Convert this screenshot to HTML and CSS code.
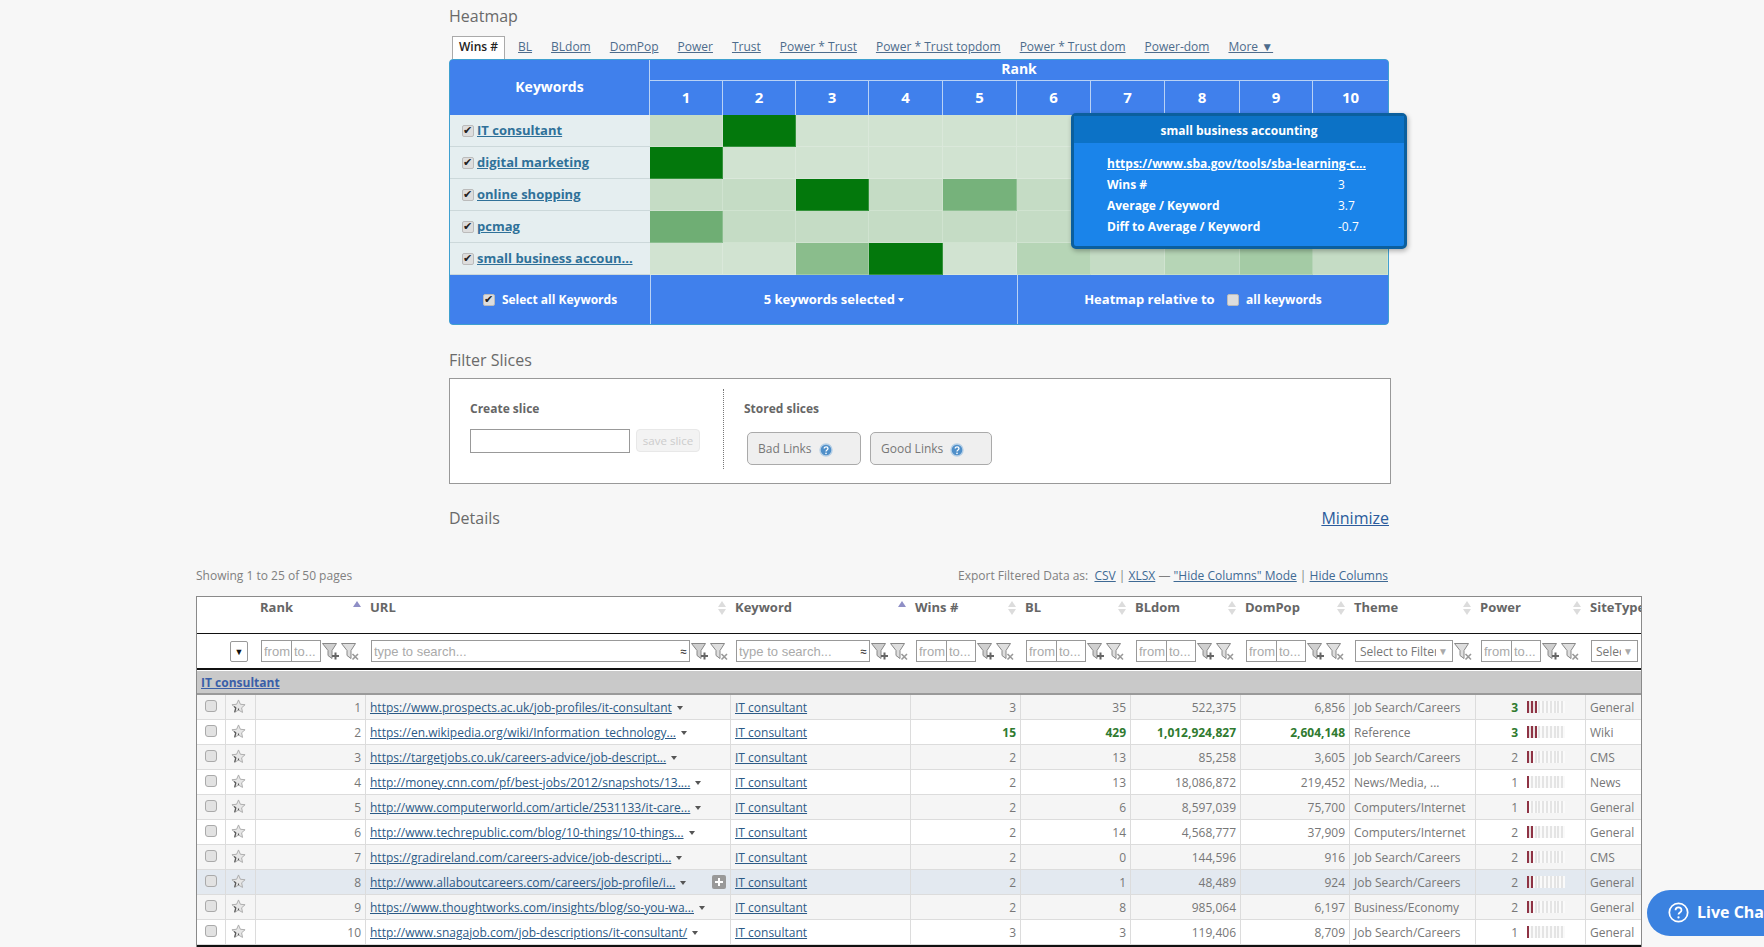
FILE: index.html
```html
<!DOCTYPE html>
<html lang="en">
<head>
  <meta charset="UTF-8" />
  <title>Heatmap</title>
  <link rel="stylesheet" href="styles.css">
</head>
<body>
  <svg class="sprites" width="0" height="0">
    <symbol id="star" viewBox="0 0 16 16">
      <path d="M8 1l2 4.6 5 .5-3.7 3.3 1 4.9L8 11.8l-4.3 2.5 1-4.9L1 6.1l5-.5z" fill="#e6e6e6" stroke="#aaa" stroke-width="1"/>
      <path d="M4 14l1.2-4.4L3.4 8M8 12v-2" fill="none" stroke="#555" stroke-width="1.2"/>
    </symbol>
    <symbol id="funnel-add" viewBox="0 0 18 18">
      <path d="M.5 1h14L10 8v8L6 13V8z" fill="#cfcfcf" stroke="#888" stroke-width="1"/>
      <path d="M13.5 10v7M10 13.5h7" stroke="#666" stroke-width="2"/>
    </symbol>
    <symbol id="funnel-clear" viewBox="0 0 18 18">
      <path d="M.5 1h14L10 8v8L6 13V8z" fill="#dedede" stroke="#888" stroke-width="1"/>
      <path d="M11.5 11.5l5.5 5.5M17 11.5L11.5 17" stroke="#999" stroke-width="1.6"/>
    </symbol>
    <symbol id="help" viewBox="0 0 14 14">
      <circle cx="7" cy="7" r="6" fill="#4f8fc9" stroke="#b5cfe6" stroke-width="1.4"/>
      <path d="M5.2 5.6c0-2.2 3.8-2.2 3.8 0 0 1.4-2 1.3-2 2.8" fill="none" stroke="#fff" stroke-width="1.3"/>
      <circle cx="7" cy="10.4" r=".8" fill="#fff"/>
    </symbol>
  </svg>

  <div class="narrow">
    <h2 class="section-title">Heatmap</h2>
    <div class="tabs">
      <a class="tab active">Wins #</a>
      <a class="tab">BL</a>
      <a class="tab">BLdom</a>
      <a class="tab">DomPop</a>
      <a class="tab">Power</a>
      <a class="tab">Trust</a>
      <a class="tab">Power * Trust</a>
      <a class="tab">Power * Trust topdom</a>
      <a class="tab">Power * Trust dom</a>
      <a class="tab">Power-dom</a>
      <a class="tab">More ▼</a>
    </div>

    <div class="heatmap">
      <table class="heat-table">
        <colgroup>
          <col class="kw-col"><col class="c73"><col class="c73"><col class="c73"><col class="c74"><col class="c74"><col class="c74"><col class="c74"><col class="c75"><col class="c73"><col>
        </colgroup>
        <thead>
          <tr class="rank-row">
            <th rowspan="2">Keywords</th>
            <th colspan="10">Rank</th>
          </tr>
          <tr class="num-row">
            <th>1</th><th>2</th><th>3</th><th>4</th><th>5</th><th>6</th><th>7</th><th>8</th><th>9</th><th>10</th>
          </tr>
        </thead>
        <tbody>
          <tr>
            <td class="kw"><input type="checkbox" class="kw-check" checked><a>IT consultant</a></td>
            <td class="h2"></td><td class="h9"></td><td class="h1"></td><td class="h1"></td><td class="h1"></td><td class="h1"></td><td class="h1"></td><td class="h1"></td><td class="h1"></td><td class="h1"></td>
          </tr>
          <tr>
            <td class="kw"><input type="checkbox" class="kw-check" checked><a>digital marketing</a></td>
            <td class="h9"></td><td class="h1"></td><td class="h1"></td><td class="h1"></td><td class="h1"></td><td class="h1"></td><td class="h1"></td><td class="h1"></td><td class="h1"></td><td class="h1"></td>
          </tr>
          <tr>
            <td class="kw"><input type="checkbox" class="kw-check" checked><a>online shopping</a></td>
            <td class="h2"></td><td class="h2"></td><td class="h9"></td><td class="h2"></td><td class="h6"></td><td class="h2"></td><td class="h2"></td><td class="h2"></td><td class="h2"></td><td class="h2"></td>
          </tr>
          <tr>
            <td class="kw"><input type="checkbox" class="kw-check" checked><a>pcmag</a></td>
            <td class="h7"></td><td class="h2"></td><td class="h2"></td><td class="h2"></td><td class="h2"></td><td class="h2"></td><td class="h2"></td><td class="h2"></td><td class="h2"></td><td class="h2"></td>
          </tr>
          <tr>
            <td class="kw"><input type="checkbox" class="kw-check" checked><a>small business accoun...</a></td>
            <td class="h1"></td><td class="h1"></td><td class="h5"></td><td class="h9"></td><td class="h1"></td><td class="h3"></td><td class="h2"></td><td class="h3"></td><td class="h4"></td><td class="h2"></td>
          </tr>
        </tbody>
        <tfoot>
          <tr>
            <td class="foot-all"><label><input type="checkbox" class="kw-check" checked>Select all Keywords</label></td>
            <td colspan="5" class="foot-mid">5 keywords selected <span class="caret white"></span></td>
            <td colspan="5" class="foot-rel">Heatmap relative to <input type="checkbox" class="kw-check"><small>all keywords</small></td>
          </tr>
        </tfoot>
      </table>

      <div class="tooltip">
        <div class="tooltip-head">small business accounting</div>
        <div class="tooltip-body">
          <a>https://www.sba.gov/tools/sba-learning-c...</a>
          <div class="tooltip-row"><b>Wins #</b><span>3</span></div>
          <div class="tooltip-row"><b>Average / Keyword</b><span>3.7</span></div>
          <div class="tooltip-row"><b>Diff to Average / Keyword</b><span>-0.7</span></div>
        </div>
      </div>
    </div>

    <h2 class="section-title filter-title">Filter Slices</h2>
    <div class="slices">
      <div class="slice-create">
        <div class="slice-label">Create slice</div>
        <div class="slice-form">
          <input type="text" class="slice-input">
          <button class="slice-save">save slice</button>
        </div>
      </div>
      <div class="slice-stored">
        <div class="slice-label">Stored slices</div>
        <div class="slice-btns">
          <button class="slice-btn bad">Bad Links <svg class="help"><use href="#help"/></svg></button>
          <button class="slice-btn good">Good Links <svg class="help"><use href="#help"/></svg></button>
        </div>
      </div>
    </div>

    <div class="details-head">
      <h2 class="section-title">Details</h2>
      <a class="minimize">Minimize</a>
    </div>

    <div class="table-info">
      <span class="showing">Showing 1 to 25 of 50 pages</span>
      <span>Export Filtered Data as: &nbsp;<a>CSV</a> | <a>XLSX</a> — <a>"Hide Columns" Mode</a> | <a>Hide Columns</a></span>
    </div>
  </div>

  <div class="data-wrap">
    <table class="data">
      <colgroup>
        <col class="w-check"><col class="w-star"><col class="w-rank"><col class="w-url"><col class="w-kw"><col class="w-wins"><col class="w-bl"><col class="w-bldom"><col class="w-dompop"><col class="w-theme"><col class="w-power"><col class="w-site">
      </colgroup>
      <thead>
        <tr class="head-row">
          <th></th><th></th>
          <th><div class="th-in">Rank<span class="sort up"></span></div></th>
          <th><div class="th-in">URL<span class="sort"></span></div></th>
          <th><div class="th-in">Keyword<span class="sort up"></span></div></th>
          <th><div class="th-in">Wins #<span class="sort"></span></div></th>
          <th><div class="th-in">BL<span class="sort"></span></div></th>
          <th><div class="th-in">BLdom<span class="sort"></span></div></th>
          <th><div class="th-in">DomPop<span class="sort"></span></div></th>
          <th><div class="th-in">Theme<span class="sort"></span></div></th>
          <th><div class="th-in">Power<span class="sort"></span></div></th>
          <th><div class="th-in">SiteType</div></th>
        </tr>
        <tr class="filter-row">
          <td></td>
          <td><span class="drop-btn">▼</span></td>
          <td><div class="f-in"><div class="range"><input placeholder="from"><input placeholder="to..."></div><svg class="fn"><use href="#funnel-add"/></svg><svg class="fn"><use href="#funnel-clear"/></svg></div></td>
          <td><div class="f-in"><div class="search url-search"><input placeholder="type to search..."><i>≈</i></div><svg class="fn"><use href="#funnel-add"/></svg><svg class="fn"><use href="#funnel-clear"/></svg></div></td>
          <td><div class="f-in"><div class="search kw-search"><input placeholder="type to search..."><i>≈</i></div><svg class="fn"><use href="#funnel-add"/></svg><svg class="fn"><use href="#funnel-clear"/></svg></div></td>
          <td><div class="f-in"><div class="range"><input placeholder="from"><input placeholder="to..."></div><svg class="fn"><use href="#funnel-add"/></svg><svg class="fn"><use href="#funnel-clear"/></svg></div></td>
          <td><div class="f-in"><div class="range"><input placeholder="from"><input placeholder="to..."></div><svg class="fn"><use href="#funnel-add"/></svg><svg class="fn"><use href="#funnel-clear"/></svg></div></td>
          <td><div class="f-in"><div class="range"><input placeholder="from"><input placeholder="to..."></div><svg class="fn"><use href="#funnel-add"/></svg><svg class="fn"><use href="#funnel-clear"/></svg></div></td>
          <td><div class="f-in"><div class="range"><input placeholder="from"><input placeholder="to..."></div><svg class="fn"><use href="#funnel-add"/></svg><svg class="fn"><use href="#funnel-clear"/></svg></div></td>
          <td><div class="f-in"><div class="pick theme-pick"><span>Select to Filter</span><i>▼</i></div><svg class="fn"><use href="#funnel-clear"/></svg></div></td>
          <td><div class="f-in"><div class="range"><input placeholder="from"><input placeholder="to..."></div><svg class="fn"><use href="#funnel-add"/></svg><svg class="fn"><use href="#funnel-clear"/></svg></div></td>
          <td><div class="f-in"><div class="pick site-pick"><span>Select to Filter</span><i>▼</i></div></div></td>
        </tr>
      </thead>
      <tbody>
        <tr class="group-row"><td colspan="12"><a>IT consultant</a></td></tr>

        <tr class="odd">
          <td><input type="checkbox" class="row-check"></td><td><svg class="star"><use href="#star"/></svg></td><td class="num">1</td>
          <td><a>https://www.prospects.ac.uk/job-profiles/it-consultant</a><span class="caret"></span></td><td><a>IT consultant</a></td>
          <td class="num">3</td><td class="num">35</td><td class="num">522,375</td><td class="num">6,856</td><td>Job Search/Careers</td>
          <td><div class="power"><b class="best">3</b><div class="bar"><div class="fill p3"></div></div></div></td><td>General</td>
        </tr>
        <tr>
          <td><input type="checkbox" class="row-check"></td><td><svg class="star"><use href="#star"/></svg></td><td class="num">2</td>
          <td><a>https://en.wikipedia.org/wiki/Information_technology...</a><span class="caret"></span></td><td><a>IT consultant</a></td>
          <td class="num best">15</td><td class="num best">429</td><td class="num best">1,012,924,827</td><td class="num best">2,604,148</td><td>Reference</td>
          <td><div class="power"><b class="best">3</b><div class="bar"><div class="fill p3"></div></div></div></td><td>Wiki</td>
        </tr>
        <tr class="odd">
          <td><input type="checkbox" class="row-check"></td><td><svg class="star"><use href="#star"/></svg></td><td class="num">3</td>
          <td><a>https://targetjobs.co.uk/careers-advice/job-descript...</a><span class="caret"></span></td><td><a>IT consultant</a></td>
          <td class="num">2</td><td class="num">13</td><td class="num">85,258</td><td class="num">3,605</td><td>Job Search/Careers</td>
          <td><div class="power"><span>2</span><div class="bar"><div class="fill p2"></div></div></div></td><td>CMS</td>
        </tr>
        <tr>
          <td><input type="checkbox" class="row-check"></td><td><svg class="star"><use href="#star"/></svg></td><td class="num">4</td>
          <td><a>http://money.cnn.com/pf/best-jobs/2012/snapshots/13....</a><span class="caret"></span></td><td><a>IT consultant</a></td>
          <td class="num">2</td><td class="num">13</td><td class="num">18,086,872</td><td class="num">219,452</td><td>News/Media, ...</td>
          <td><div class="power"><span>1</span><div class="bar"><div class="fill p1"></div></div></div></td><td>News</td>
        </tr>
        <tr class="odd">
          <td><input type="checkbox" class="row-check"></td><td><svg class="star"><use href="#star"/></svg></td><td class="num">5</td>
          <td><a>http://www.computerworld.com/article/2531133/it-care...</a><span class="caret"></span></td><td><a>IT consultant</a></td>
          <td class="num">2</td><td class="num">6</td><td class="num">8,597,039</td><td class="num">75,700</td><td>Computers/Internet</td>
          <td><div class="power"><span>1</span><div class="bar"><div class="fill p1"></div></div></div></td><td>General</td>
        </tr>
        <tr>
          <td><input type="checkbox" class="row-check"></td><td><svg class="star"><use href="#star"/></svg></td><td class="num">6</td>
          <td><a>http://www.techrepublic.com/blog/10-things/10-things...</a><span class="caret"></span></td><td><a>IT consultant</a></td>
          <td class="num">2</td><td class="num">14</td><td class="num">4,568,777</td><td class="num">37,909</td><td>Computers/Internet</td>
          <td><div class="power"><span>2</span><div class="bar"><div class="fill p2"></div></div></div></td><td>General</td>
        </tr>
        <tr class="odd">
          <td><input type="checkbox" class="row-check"></td><td><svg class="star"><use href="#star"/></svg></td><td class="num">7</td>
          <td><a>https://gradireland.com/careers-advice/job-descripti...</a><span class="caret"></span></td><td><a>IT consultant</a></td>
          <td class="num">2</td><td class="num">0</td><td class="num">144,596</td><td class="num">916</td><td>Job Search/Careers</td>
          <td><div class="power"><span>2</span><div class="bar"><div class="fill p2"></div></div></div></td><td>CMS</td>
        </tr>
        <tr class="hover">
          <td><input type="checkbox" class="row-check"></td><td><svg class="star"><use href="#star"/></svg></td><td class="num">8</td>
          <td class="url-plus"><a>http://www.allaboutcareers.com/careers/job-profile/i...</a><span class="caret"></span><span class="plus"></span></td><td><a>IT consultant</a></td>
          <td class="num">2</td><td class="num">1</td><td class="num">48,489</td><td class="num">924</td><td>Job Search/Careers</td>
          <td><div class="power"><span>2</span><div class="bar"><div class="fill p2"></div></div></div></td><td>General</td>
        </tr>
        <tr class="odd">
          <td><input type="checkbox" class="row-check"></td><td><svg class="star"><use href="#star"/></svg></td><td class="num">9</td>
          <td><a>https://www.thoughtworks.com/insights/blog/so-you-wa...</a><span class="caret"></span></td><td><a>IT consultant</a></td>
          <td class="num">2</td><td class="num">8</td><td class="num">985,064</td><td class="num">6,197</td><td>Business/Economy</td>
          <td><div class="power"><span>2</span><div class="bar"><div class="fill p2"></div></div></div></td><td>General</td>
        </tr>
        <tr>
          <td><input type="checkbox" class="row-check"></td><td><svg class="star"><use href="#star"/></svg></td><td class="num">10</td>
          <td><a>http://www.snagajob.com/job-descriptions/it-consultant/</a><span class="caret"></span></td><td><a>IT consultant</a></td>
          <td class="num">3</td><td class="num">3</td><td class="num">119,406</td><td class="num">8,709</td><td>Job Search/Careers</td>
          <td><div class="power"><span>1</span><div class="bar"><div class="fill p1"></div></div></div></td><td>General</td>
        </tr>
      </tbody>
    </table>
  </div>

  <div class="live-chat">
    <svg class="chat-icon" viewBox="0 0 24 24"><circle cx="12" cy="12" r="10.5" fill="none" stroke="#fff" stroke-width="2"/><path d="M8.6 9.4c0-4.4 6.8-4.4 6.8 0 0 2.7-3.4 2.5-3.4 5" fill="none" stroke="#fff" stroke-width="2"/><circle cx="12" cy="17.6" r="1.3" fill="#fff"/></svg>
    <span>Live Chat</span>
  </div>
</body>
</html>
```

FILE: styles.css
```css
* {
  box-sizing: border-box;
}

html, body {
  height: 947px;
  overflow: hidden;
}

body {
  margin: 0;
  font-family: "Open Sans", sans-serif;
  font-size: 12px;
  background-color: #f7f7f7;
  color: #777;
}

a {
  color: #2b5a86;
  text-decoration: underline;
}

.sprites {
  position: absolute;
}

.narrow {
  margin-left: 449px;
  width: 940px;
  padding-top: 4px;
}

.section-title {
  margin: 0;
  font-size: 16px;
  font-weight: 400;
  line-height: 24px;
  color: #6a6a6a;
}

/* tabs */
.tabs {
  display: flex;
  gap: 19px;
  margin-top: 8px;
  padding-left: 3px;
  height: 23px;
  font-size: 12px;
  line-height: 21px;
}

.tab {
  color: #4d6c8c;
}

.tab.active {
  background-color: #fff;
  border: 1px solid #aaa;
  border-bottom: none;
  margin-right: -6px;
  padding: 0 6px;
  line-height: 20px;
  font-weight: 600;
  color: #222;
  text-decoration: none;
}

/* heatmap */
.heatmap {
  position: relative;
}

.heat-table {
  width: 940px;
  height: 266px;
  table-layout: fixed;
  border-collapse: separate;
  border-spacing: 0;
  border: 1px solid #3fa0d0;
  border-radius: 4px;
  overflow: hidden;
  background-color: #4080ec;
}

.kw-col { width: 200px; }
.c73 { width: 73px; }
.c74 { width: 74px; }
.c75 { width: 75px; }

.heat-table th {
  color: #fff;
  font-weight: 700;
  font-size: 14px;
  line-height: 16px;
  padding: 0 0 2px;
  background-color: #4080ec;
}

.rank-row { height: 21px; }
.num-row { height: 34px; }

.rank-row th:first-child {
  border-right: 1px solid #b9d2f5;
}

.rank-row th:last-child {
  border-bottom: 1px solid #b9d2f5;
}

.num-row th {
  font-size: 15px;
  border-right: 1px solid #b9d2f5;
}

.num-row th:last-child {
  border-right: none;
}

.heat-table tbody tr {
  height: 32px;
}

.heat-table tbody td {
  padding: 0;
  border-right: 1px solid rgba(255, 255, 255, 0.2);
  border-bottom: 1px solid rgba(255, 255, 255, 0.2);
}

.heat-table td.kw {
  background-color: #e5eef0;
  border-right: none;
  border-bottom: 1px solid #ccd8da;
  padding: 0 0 2px 12px;
  font-size: 13px;
  font-weight: 700;
  white-space: nowrap;
}

.kw a {
  color: #2f7199;
}

.h1 { background-color: #d1e3d1; }
.h2 { background-color: #c5dcc5; }
.h3 { background-color: #b6d5b6; }
.h4 { background-color: #a4cba5; }
.h5 { background-color: #8abd8c; }
.h6 { background-color: #76b27b; }
.h7 { background-color: #6fae74; }
.h9 { background-color: #03780c; }

.kw-check {
  appearance: none;
  width: 12px;
  height: 12px;
  margin: 0 3px 0 0;
  vertical-align: -2px;
  background-color: #ddd;
  border-radius: 2px;
  border: 1px solid #bbb;
  position: relative;
}

.kw-check:checked::after {
  content: "✔";
  position: absolute;
  top: -2px;
  left: 0;
  font-size: 11px;
  line-height: 13px;
  color: #222;
}

.heat-table tfoot tr {
  height: 49px;
}

.heat-table tfoot td {
  padding: 0 0 1px;
  color: #fff;
  font-weight: 700;
  text-align: center;
  background-color: #4080ec;
  border-left: 1px solid #b9d2f5;
  font-size: 13px;
}

.heat-table td.foot-all {
  border-left: none;
  font-size: 12px;
}

.foot-all .kw-check {
  margin-right: 7px;
}

.foot-rel .kw-check {
  margin: 0 7px 0 9px;
}

.foot-rel small {
  font-size: 12px;
}

.caret {
  display: inline-block;
  width: 0;
  height: 0;
  margin-left: 5px;
  vertical-align: 2px;
  border-left: 3.5px solid transparent;
  border-right: 3.5px solid transparent;
  border-top: 4px solid #555;
}

.caret.white {
  margin-left: 0;
  border-top-color: #fff;
}

/* tooltip over the heat cells */
.tooltip {
  position: absolute;
  left: 622px;
  top: 54px;
  width: 336px;
  height: 136px;
  background-color: #1a84ea;
  border: 3px solid #0b5f9e;
  border-radius: 5px;
  box-shadow: 1px 2px 5px rgba(0, 0, 0, 0.3);
  color: #fff;
  font-size: 12px;
}

.tooltip-head {
  height: 27px;
  line-height: 29px;
  text-align: center;
  font-weight: 700;
  background-color: #0c72c6;
}

.tooltip-body {
  padding: 10px 0 0 33px;
}

.tooltip-body a {
  display: block;
  height: 21px;
  line-height: 21px;
  color: #fff;
  font-weight: 700;
}

.tooltip-row {
  display: flex;
  height: 21px;
  line-height: 21px;
}

.tooltip-row b {
  width: 231px;
}

/* slices */
.filter-title {
  margin-top: 23px;
}

.slices {
  display: flex;
  margin-top: 6px;
  width: 942px;
  height: 106px;
  background-color: #fff;
  border: 1px solid #999;
  padding: 10px 0 0 20px;
}

.slice-create {
  width: 254px;
  height: 80px;
  border-right: 1px dotted #777;
}

.slice-label {
  padding-top: 11px;
  font-size: 12px;
  font-weight: 700;
  line-height: 17px;
  color: #666;
}

.slice-form {
  display: flex;
  gap: 6px;
  margin-top: 12px;
}

.slice-input {
  width: 160px;
  height: 24px;
  border: 1px solid #999;
  background-color: #fff;
}

.slice-save {
  width: 64px;
  height: 23px;
  padding: 0;
  font: 11.5px "Open Sans", sans-serif;
  color: #ccc;
  background-color: #f3f3f3;
  border: 1px solid #e8e8e8;
  border-radius: 4px;
}

.slice-stored {
  padding-left: 20px;
}

.slice-btns {
  display: flex;
  gap: 9px;
  margin: 15px 0 0 3px;
}

.slice-btn {
  display: flex;
  align-items: center;
  gap: 7px;
  height: 33px;
  padding: 0 0 0 10px;
  font: 12px "Open Sans", sans-serif;
  color: #777;
  background-color: #efefef;
  border: 1px solid #aaa;
  border-radius: 5px;
}

.slice-btn.bad { width: 114px; }
.slice-btn.good { width: 122px; }

.help {
  width: 14px;
  height: 14px;
  margin-top: 2px;
}

.details-head {
  display: flex;
  justify-content: space-between;
  align-items: center;
  margin-top: 22px;
}

.minimize {
  font-size: 16px;
  color: #2a5b9c;
}

.table-info {
  display: flex;
  justify-content: space-between;
  height: 20px;
  margin: 36px 0 10px -253px;
  width: 1192px;
  line-height: 20px;
  font-size: 12px;
  color: #808080;
}

.table-info a {
  color: #3f6a94;
}

/* data table */
.data-wrap {
  margin-left: 196px;
  width: 1446px;
  border: 1px solid #8a8a8a;
  border-bottom: none;
  overflow: hidden;
  background-color: #fff;
}

.data {
  width: 1472px;
  table-layout: fixed;
  border-collapse: separate;
  border-spacing: 0;
  border-bottom: 2px solid #111;
}

.w-check { width: 29px; }
.w-star { width: 30px; }
.w-rank { width: 110px; }
.w-url { width: 365px; }
.w-kw { width: 180px; }
.w-wins { width: 110px; }
.w-bl { width: 110px; }
.w-bldom { width: 110px; }
.w-dompop { width: 109px; }
.w-theme { width: 126px; }
.w-power { width: 110px; }
.w-site { width: 83px; }

.head-row {
  height: 37px;
}

.head-row th {
  padding: 0 5px 0 4px;
  text-align: left;
  vertical-align: top;
  font-size: 13px;
  color: #666;
  border-bottom: 1.5px solid #111;
}

.th-in {
  display: flex;
  justify-content: space-between;
  padding-top: 1px;
  line-height: 18px;
  white-space: nowrap;
}

.sort {
  position: relative;
  width: 8px;
  height: 14px;
  margin-top: 3px;
}

.sort::before,
.sort::after {
  content: "";
  position: absolute;
  left: 0;
  border-left: 4px solid transparent;
  border-right: 4px solid transparent;
}

.sort::before {
  top: 0;
  border-bottom: 6px solid #dcdcdc;
}

.sort::after {
  bottom: 0;
  border-top: 6px solid #dcdcdc;
}

.sort.up::before {
  border-bottom-color: #8f8fc6;
}

.sort.up::after {
  display: none;
}

.filter-row {
  height: 36px;
}

.filter-row td {
  padding: 0 0 0 5px;
  border-bottom: 2px solid #111;
  vertical-align: middle;
}

.filter-row td:nth-child(2) {
  padding-left: 4px;
}

.drop-btn {
  display: block;
  width: 18px;
  height: 21px;
  font-size: 9px;
  line-height: 20px;
  text-align: center;
  color: #111;
  border: 1px solid #999;
  border-radius: 2px;
}

.f-in {
  display: flex;
  align-items: center;
  gap: 1px;
}

.range {
  display: flex;
  width: 60px;
  height: 22px;
  border: 1px solid #999;
  flex: none;
}

.range input {
  width: 30px;
  min-width: 0;
  border: none;
  padding: 0 0 0 2px;
  font: 13px "Liberation Sans", sans-serif;
  background: none;
}

.range input + input {
  border-left: 1px solid #999;
}

input::placeholder {
  color: #aaa;
  opacity: 1;
}

.search {
  display: flex;
  align-items: center;
  height: 22px;
  border: 1px solid #999;
  flex: none;
  padding-right: 2px;
}

.url-search { width: 319px; }
.kw-search { width: 134px; }

.search input {
  flex: 1;
  min-width: 0;
  border: none;
  padding: 0 0 0 2px;
  font: 13px "Liberation Sans", sans-serif;
  background: none;
}

.search i {
  font-style: normal;
  font-size: 12px;
  color: #222;
}

.pick {
  display: flex;
  align-items: center;
  height: 22px;
  padding: 0 4px;
  border: 1px solid #999;
  flex: none;
  color: #777;
}

.pick span {
  flex: 1;
  min-width: 0;
  overflow: hidden;
  white-space: nowrap;
}

.pick i {
  font-style: normal;
  font-size: 10px;
  color: #aaa;
  margin-left: 2px;
}

.theme-pick { width: 98px; }
.site-pick { width: 47px; }

.fn {
  width: 18px;
  height: 19px;
  flex: none;
}

.group-row {
  height: 25px;
}

.group-row td {
  padding: 0 4px;
  background-color: #c9c9c9;
  border-top: 1px solid #fff;
  border-bottom: 2px solid #9a9a9a;
  font-weight: 700;
}

.group-row a {
  color: #3a5fa8;
}

.data tbody tr:not(.group-row) {
  height: 25px;
}

.data tbody tr:not(.group-row) td {
  padding: 0 4px;
  border-right: 1px solid #dcdcdc;
  border-bottom: 1px solid #dcdcdc;
  white-space: nowrap;
  overflow: hidden;
  background-color: #fff;
}

.data tbody tr.odd td {
  background-color: #f5f5f5;
}

.data tbody tr.hover td {
  background-color: #e3e9f0;
}

.data .num {
  text-align: right;
}

.data .best {
  color: #2f7a2f;
  font-weight: 700;
}

.row-check {
  appearance: none;
  display: block;
  width: 12px;
  height: 12px;
  margin: -3px 0 0 4px;
  background-color: #e2e2e2;
  border: 1px solid #aaa;
  border-radius: 3px;
}

.star {
  display: block;
  width: 15px;
  height: 15px;
  margin: -2px 0 0 1px;
}

.url-plus {
  position: relative;
}

.plus {
  position: absolute;
  right: 4px;
  top: 5px;
  width: 14px;
  height: 14px;
  border-radius: 2px;
  background:
    linear-gradient(#fff, #fff) center / 8px 2px no-repeat,
    linear-gradient(#fff, #fff) center / 2px 8px no-repeat,
    #999;
}

.power {
  display: flex;
  justify-content: flex-end;
  align-items: center;
  gap: 9px;
  padding-right: 16px;
}

.bar {
  width: 38px;
  height: 12px;
  background: repeating-linear-gradient(90deg, #e4e4e4 0, #e4e4e4 2px, #fafafa 2px, #fafafa 3.8px);
}

.fill {
  height: 12px;
  background: repeating-linear-gradient(90deg, #8e3344 0, #8e3344 2px, #e8e0e0 2px, #e8e0e0 3.8px);
}

.p1 { width: 2px; }
.p2 { width: 6px; }
.p3 { width: 10px; }

/* floating chat button */
.live-chat {
  position: fixed;
  left: 1647px;
  top: 890px;
  display: flex;
  align-items: center;
  gap: 8px;
  width: 160px;
  height: 46px;
  padding: 0 0 2px 21px;
  border-radius: 23px;
  background-color: #3b82e0;
  color: #fff;
  font-size: 16px;
  font-weight: 700;
  white-space: nowrap;
}

.chat-icon {
  width: 21px;
  height: 21px;
}
```
